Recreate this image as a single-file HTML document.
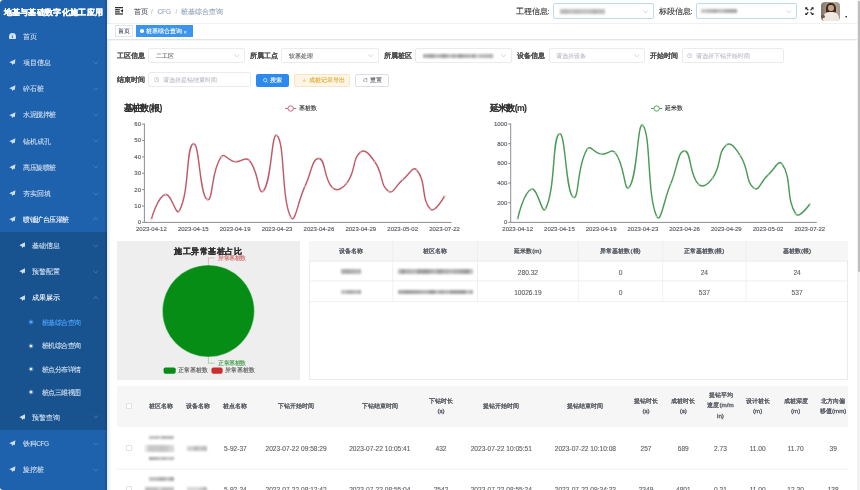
<!DOCTYPE html><html><head><meta charset="utf-8"><style>
*{margin:0;padding:0;box-sizing:border-box}
html,body{width:860px;height:490px;overflow:hidden;background:#fff;font-family:"Liberation Sans", sans-serif;}
#w{position:absolute;left:0;top:0;width:860px;height:490px;will-change:transform}
.a{position:absolute;white-space:nowrap}
.t{position:absolute;white-space:nowrap;line-height:1;transform:translateY(-50%)}
.c{position:absolute;white-space:nowrap;line-height:1;transform:translate(-50%,-50%)}
.r{position:absolute;white-space:nowrap;line-height:1;transform:translate(-100%,-50%)}
.m{position:absolute;white-space:nowrap;transform:translate(-50%,-50%);text-align:center}
.blur{position:absolute;filter:blur(1px)}
</style></head><body><div id="w">

<div class="a" style="left:0;top:0;width:107px;height:490px;background:#1e61ad;border-radius:3.5px 0 0 3px"></div>
<div class="a" style="left:0;top:232.2px;width:107px;height:198.2px;background:#18538f"></div>
<div class="a" style="left:104.6px;top:0;width:2.4px;height:490px;background:rgba(0,20,60,.13)"></div>
<div class="t" style="left:3.50px;top:11.90px;font-size:8.30px;color:#fff;letter-spacing:0.330px;font-weight:bold;-webkit-text-stroke:0.3px #fff;">地基与基础数字化施工应用</div>
<svg class="a" style="left:8.9px;top:32.900000000000006px" width="7" height="6" viewBox="0 0 16 14"><path d="M8 0 A8 8 0 0 1 16 8 L16 12 Q16 14 14 14 L2 14 Q0 14 0 12 L0 8 A8 8 0 0 1 8 0 Z" fill="#d5e6fa"/><path d="M8 10 L7 4.5" stroke="#3a5f8f" stroke-width="1.5"/><circle cx="8" cy="10" r="1.5" fill="#3a5f8f"/></svg>
<div class="t" style="left:23.40px;top:36.70px;font-size:6.50px;color:#d3e0f0;-webkit-text-stroke:0.08px #d3e0f0;">首页</div>
<svg class="a" style="left:9.2px;top:59.199999999999996px" width="6.8" height="6.4" viewBox="0 0 16 15"><path d="M15.2 0.3 L0.6 7.8 L5.6 9.6 L8.6 14.2 L10.2 10.8 L13.2 12.4 Z" fill="#d8e7fa"/><path d="M15 0.6 L5.6 9.6" stroke="rgba(31,90,170,.35)" stroke-width="1"/></svg>
<div class="t" style="left:23.40px;top:62.90px;font-size:6.50px;color:#d3e0f0;-webkit-text-stroke:0.08px #d3e0f0;">项目信息</div>
<svg class="a" style="left:92.7px;top:60.6px;overflow:visible" width="5.6" height="3.6" viewBox="-0.5 -0.5 5.6 3.6"><path d="M0 0 L2.3 2.6 L4.6 0" fill="none" stroke="rgba(255,255,255,.24)" stroke-width="0.8"/></svg>
<svg class="a" style="left:9.2px;top:85.39999999999999px" width="6.8" height="6.4" viewBox="0 0 16 15"><path d="M15.2 0.3 L0.6 7.8 L5.6 9.6 L8.6 14.2 L10.2 10.8 L13.2 12.4 Z" fill="#d8e7fa"/><path d="M15 0.6 L5.6 9.6" stroke="rgba(31,90,170,.35)" stroke-width="1"/></svg>
<div class="t" style="left:23.40px;top:89.10px;font-size:6.50px;color:#d3e0f0;-webkit-text-stroke:0.08px #d3e0f0;">碎石桩</div>
<svg class="a" style="left:92.7px;top:86.8px;overflow:visible" width="5.6" height="3.6" viewBox="-0.5 -0.5 5.6 3.6"><path d="M0 0 L2.3 2.6 L4.6 0" fill="none" stroke="rgba(255,255,255,.24)" stroke-width="0.8"/></svg>
<svg class="a" style="left:9.2px;top:111.6px" width="6.8" height="6.4" viewBox="0 0 16 15"><path d="M15.2 0.3 L0.6 7.8 L5.6 9.6 L8.6 14.2 L10.2 10.8 L13.2 12.4 Z" fill="#d8e7fa"/><path d="M15 0.6 L5.6 9.6" stroke="rgba(31,90,170,.35)" stroke-width="1"/></svg>
<div class="t" style="left:23.40px;top:115.30px;font-size:6.50px;color:#d3e0f0;letter-spacing:-0.520px;-webkit-text-stroke:0.08px #d3e0f0;">水泥搅拌桩</div>
<svg class="a" style="left:92.7px;top:113.0px;overflow:visible" width="5.6" height="3.6" viewBox="-0.5 -0.5 5.6 3.6"><path d="M0 0 L2.3 2.6 L4.6 0" fill="none" stroke="rgba(255,255,255,.24)" stroke-width="0.8"/></svg>
<svg class="a" style="left:9.2px;top:137.8px" width="6.8" height="6.4" viewBox="0 0 16 15"><path d="M15.2 0.3 L0.6 7.8 L5.6 9.6 L8.6 14.2 L10.2 10.8 L13.2 12.4 Z" fill="#d8e7fa"/><path d="M15 0.6 L5.6 9.6" stroke="rgba(31,90,170,.35)" stroke-width="1"/></svg>
<div class="t" style="left:23.40px;top:141.50px;font-size:6.50px;color:#d3e0f0;-webkit-text-stroke:0.08px #d3e0f0;">钻机成孔</div>
<svg class="a" style="left:92.7px;top:139.2px;overflow:visible" width="5.6" height="3.6" viewBox="-0.5 -0.5 5.6 3.6"><path d="M0 0 L2.3 2.6 L4.6 0" fill="none" stroke="rgba(255,255,255,.24)" stroke-width="0.8"/></svg>
<svg class="a" style="left:9.2px;top:164.0px" width="6.8" height="6.4" viewBox="0 0 16 15"><path d="M15.2 0.3 L0.6 7.8 L5.6 9.6 L8.6 14.2 L10.2 10.8 L13.2 12.4 Z" fill="#d8e7fa"/><path d="M15 0.6 L5.6 9.6" stroke="rgba(31,90,170,.35)" stroke-width="1"/></svg>
<div class="t" style="left:23.40px;top:167.70px;font-size:6.50px;color:#d3e0f0;letter-spacing:-0.520px;-webkit-text-stroke:0.08px #d3e0f0;">高压旋喷桩</div>
<svg class="a" style="left:92.7px;top:165.39999999999998px;overflow:visible" width="5.6" height="3.6" viewBox="-0.5 -0.5 5.6 3.6"><path d="M0 0 L2.3 2.6 L4.6 0" fill="none" stroke="rgba(255,255,255,.24)" stroke-width="0.8"/></svg>
<svg class="a" style="left:9.2px;top:190.20000000000002px" width="6.8" height="6.4" viewBox="0 0 16 15"><path d="M15.2 0.3 L0.6 7.8 L5.6 9.6 L8.6 14.2 L10.2 10.8 L13.2 12.4 Z" fill="#d8e7fa"/><path d="M15 0.6 L5.6 9.6" stroke="rgba(31,90,170,.35)" stroke-width="1"/></svg>
<div class="t" style="left:23.40px;top:193.90px;font-size:6.50px;color:#d3e0f0;-webkit-text-stroke:0.08px #d3e0f0;">夯实回填</div>
<svg class="a" style="left:92.7px;top:191.6px;overflow:visible" width="5.6" height="3.6" viewBox="-0.5 -0.5 5.6 3.6"><path d="M0 0 L2.3 2.6 L4.6 0" fill="none" stroke="rgba(255,255,255,.24)" stroke-width="0.8"/></svg>
<svg class="a" style="left:9.2px;top:215.9px" width="6.8" height="6.4" viewBox="0 0 16 15"><path d="M15.2 0.3 L0.6 7.8 L5.6 9.6 L8.6 14.2 L10.2 10.8 L13.2 12.4 Z" fill="#d8e7fa"/><path d="M15 0.6 L5.6 9.6" stroke="rgba(31,90,170,.35)" stroke-width="1"/></svg>
<div class="t" style="left:23.40px;top:219.60px;font-size:6.50px;color:#ffffff;letter-spacing:-0.520px;-webkit-text-stroke:0.08px #ffffff;">喷锤扩台压灌桩</div>
<svg class="a" style="left:92.7px;top:217.29999999999998px;overflow:visible" width="5.6" height="3.6" viewBox="-0.5 -0.5 5.6 3.6"><path d="M0 2.6 L2.3 0 L4.6 2.6" fill="none" stroke="rgba(255,255,255,.24)" stroke-width="0.8"/></svg>
<svg class="a" style="left:18.6px;top:242.10000000000002px" width="6.8" height="6.4" viewBox="0 0 16 15"><path d="M15.2 0.3 L0.6 7.8 L5.6 9.6 L8.6 14.2 L10.2 10.8 L13.2 12.4 Z" fill="#d8e7fa"/><path d="M15 0.6 L5.6 9.6" stroke="rgba(31,90,170,.35)" stroke-width="1"/></svg>
<div class="t" style="left:32.40px;top:245.80px;font-size:6.50px;color:#d3e0f0;-webkit-text-stroke:0.08px #d3e0f0;">基础信息</div>
<svg class="a" style="left:92.7px;top:243.5px;overflow:visible" width="5.6" height="3.6" viewBox="-0.5 -0.5 5.6 3.6"><path d="M0 0 L2.3 2.6 L4.6 0" fill="none" stroke="rgba(255,255,255,.24)" stroke-width="0.8"/></svg>
<svg class="a" style="left:18.6px;top:268.3px" width="6.8" height="6.4" viewBox="0 0 16 15"><path d="M15.2 0.3 L0.6 7.8 L5.6 9.6 L8.6 14.2 L10.2 10.8 L13.2 12.4 Z" fill="#d8e7fa"/><path d="M15 0.6 L5.6 9.6" stroke="rgba(31,90,170,.35)" stroke-width="1"/></svg>
<div class="t" style="left:32.40px;top:272.00px;font-size:6.50px;color:#d3e0f0;-webkit-text-stroke:0.08px #d3e0f0;">预警配置</div>
<svg class="a" style="left:92.7px;top:269.7px;overflow:visible" width="5.6" height="3.6" viewBox="-0.5 -0.5 5.6 3.6"><path d="M0 0 L2.3 2.6 L4.6 0" fill="none" stroke="rgba(255,255,255,.24)" stroke-width="0.8"/></svg>
<svg class="a" style="left:18.6px;top:294.5px" width="6.8" height="6.4" viewBox="0 0 16 15"><path d="M15.2 0.3 L0.6 7.8 L5.6 9.6 L8.6 14.2 L10.2 10.8 L13.2 12.4 Z" fill="#d8e7fa"/><path d="M15 0.6 L5.6 9.6" stroke="rgba(31,90,170,.35)" stroke-width="1"/></svg>
<div class="t" style="left:32.40px;top:298.20px;font-size:6.50px;color:#ffffff;-webkit-text-stroke:0.08px #ffffff;">成果展示</div>
<svg class="a" style="left:92.7px;top:295.9px;overflow:visible" width="5.6" height="3.6" viewBox="-0.5 -0.5 5.6 3.6"><path d="M0 2.6 L2.3 0 L4.6 2.6" fill="none" stroke="rgba(255,255,255,.24)" stroke-width="0.8"/></svg>
<svg class="a" style="left:28.400000000000002px;top:319.4px" width="6" height="6" viewBox="0 0 6 6"><circle cx="3" cy="3" r="2.5" fill="rgba(90,170,255,.35)"/><circle cx="3" cy="3" r="1.35" fill="#4da6ff"/></svg>
<div class="t" style="left:41.80px;top:322.90px;font-size:6.50px;color:#4da6ff;letter-spacing:-0.520px;-webkit-text-stroke:0.08px #4da6ff;">桩基综合查询</div>
<svg class="a" style="left:28.400000000000002px;top:342.7px" width="6" height="6" viewBox="0 0 6 6"><circle cx="3" cy="3" r="2.5" fill="rgba(255,255,255,.22)"/><circle cx="3" cy="3" r="1.35" fill="#e6edf7"/></svg>
<div class="t" style="left:41.80px;top:346.20px;font-size:6.50px;color:#d3e0f0;letter-spacing:-0.520px;-webkit-text-stroke:0.08px #d3e0f0;">桩机综合查询</div>
<svg class="a" style="left:28.400000000000002px;top:366.0px" width="6" height="6" viewBox="0 0 6 6"><circle cx="3" cy="3" r="2.5" fill="rgba(255,255,255,.22)"/><circle cx="3" cy="3" r="1.35" fill="#e6edf7"/></svg>
<div class="t" style="left:41.80px;top:369.50px;font-size:6.50px;color:#d3e0f0;letter-spacing:-0.520px;-webkit-text-stroke:0.08px #d3e0f0;">桩点分布详情</div>
<svg class="a" style="left:28.400000000000002px;top:389.3px" width="6" height="6" viewBox="0 0 6 6"><circle cx="3" cy="3" r="2.5" fill="rgba(255,255,255,.22)"/><circle cx="3" cy="3" r="1.35" fill="#e6edf7"/></svg>
<div class="t" style="left:41.80px;top:392.80px;font-size:6.50px;color:#d3e0f0;letter-spacing:-0.520px;-webkit-text-stroke:0.08px #d3e0f0;">桩点三维视图</div>
<svg class="a" style="left:18.6px;top:414.0px" width="6.8" height="6.4" viewBox="0 0 16 15"><path d="M15.2 0.3 L0.6 7.8 L5.6 9.6 L8.6 14.2 L10.2 10.8 L13.2 12.4 Z" fill="#d8e7fa"/><path d="M15 0.6 L5.6 9.6" stroke="rgba(31,90,170,.35)" stroke-width="1"/></svg>
<div class="t" style="left:32.40px;top:417.70px;font-size:6.50px;color:#d3e0f0;-webkit-text-stroke:0.08px #d3e0f0;">预警查询</div>
<svg class="a" style="left:92.7px;top:415.4px;overflow:visible" width="5.6" height="3.6" viewBox="-0.5 -0.5 5.6 3.6"><path d="M0 0 L2.3 2.6 L4.6 0" fill="none" stroke="rgba(255,255,255,.24)" stroke-width="0.8"/></svg>
<svg class="a" style="left:9.2px;top:440.2px" width="6.8" height="6.4" viewBox="0 0 16 15"><path d="M15.2 0.3 L0.6 7.8 L5.6 9.6 L8.6 14.2 L10.2 10.8 L13.2 12.4 Z" fill="#d8e7fa"/><path d="M15 0.6 L5.6 9.6" stroke="rgba(31,90,170,.35)" stroke-width="1"/></svg>
<div class="t" style="left:23.40px;top:443.90px;font-size:6.50px;color:#d3e0f0;letter-spacing:-0.520px;-webkit-text-stroke:0.08px #d3e0f0;">铁科CFG</div>
<svg class="a" style="left:92.7px;top:441.59999999999997px;overflow:visible" width="5.6" height="3.6" viewBox="-0.5 -0.5 5.6 3.6"><path d="M0 0 L2.3 2.6 L4.6 0" fill="none" stroke="rgba(255,255,255,.24)" stroke-width="0.8"/></svg>
<svg class="a" style="left:9.2px;top:466.40000000000003px" width="6.8" height="6.4" viewBox="0 0 16 15"><path d="M15.2 0.3 L0.6 7.8 L5.6 9.6 L8.6 14.2 L10.2 10.8 L13.2 12.4 Z" fill="#d8e7fa"/><path d="M15 0.6 L5.6 9.6" stroke="rgba(31,90,170,.35)" stroke-width="1"/></svg>
<div class="t" style="left:23.40px;top:470.10px;font-size:6.50px;color:#d3e0f0;-webkit-text-stroke:0.08px #d3e0f0;">旋挖桩</div>
<svg class="a" style="left:92.7px;top:467.8px;overflow:visible" width="5.6" height="3.6" viewBox="-0.5 -0.5 5.6 3.6"><path d="M0 0 L2.3 2.6 L4.6 0" fill="none" stroke="rgba(255,255,255,.24)" stroke-width="0.8"/></svg>
<div class="a" style="left:107px;top:0;width:750px;height:24.2px;background:#fff;border-bottom:1px solid #f0f0f0"></div>
<div class="a" style="left:107px;top:0;width:4px;height:490px;background:linear-gradient(90deg,rgba(0,21,41,.10),rgba(0,21,41,0))"></div>
<svg class="a" style="left:115.1px;top:7.2px" width="8" height="7.6" viewBox="0 0 16 15.2"><rect x="0" y="0" width="16" height="2.5" fill="#2d2d2d"/><rect x="0" y="4.2" width="9.6" height="2.5" fill="#2d2d2d"/><rect x="0" y="8.5" width="9.6" height="2.5" fill="#2d2d2d"/><rect x="0" y="12.7" width="16" height="2.5" fill="#2d2d2d"/><path d="M16 3.8 L11 7.6 L16 11.4 Z" fill="#2d2d2d"/></svg>
<div class="t" style="left:134.30px;top:11.90px;font-size:6.60px;color:#50535a;-webkit-text-stroke:0.1px #50535a;">首页</div>
<div class="t" style="left:151.00px;top:12.40px;font-size:6.50px;color:#c0c4cc;-webkit-text-stroke:0.12px #c0c4cc;">/</div>
<div class="t" style="left:157.40px;top:12.40px;font-size:6.50px;color:#97a8be;-webkit-text-stroke:0.12px #97a8be;">CFG</div>
<div class="t" style="left:175.60px;top:12.40px;font-size:6.50px;color:#c0c4cc;-webkit-text-stroke:0.12px #c0c4cc;">/</div>
<div class="t" style="left:181.30px;top:11.90px;font-size:6.60px;color:#97a8be;-webkit-text-stroke:0.12px #97a8be;">桩基综合查询</div>
<div class="t" style="left:515.60px;top:12.10px;font-size:7.50px;color:#303133;-webkit-text-stroke:0.1px #303133;">工程信息:</div>
<div class="a" style="left:552.7px;top:3.1px;width:101.1px;height:16.4px;border:0.7px solid #bcdce8;border-radius:2px;background:#fff"></div><div class="a" style="left:560.20px;top:9.00px;width:45.00px;height:4.60px;filter:blur(1.0px);display:flex"><div style="width:3.47px;height:100%;background:rgb(189,189,189)"></div><div style="width:4.74px;height:100%;background:rgb(184,184,184)"></div><div style="width:6.75px;height:100%;background:rgb(195,195,195)"></div><div style="width:3.68px;height:100%;background:rgb(187,187,187)"></div><div style="width:5.09px;height:100%;background:rgb(194,194,194)"></div><div style="width:5.68px;height:100%;background:rgb(197,197,197)"></div><div style="width:3.61px;height:100%;background:rgb(191,191,191)"></div><div style="width:3.93px;height:100%;background:rgb(181,181,181)"></div><div style="width:6.51px;height:100%;background:rgb(190,190,190)"></div><div style="width:1.56px;height:100%;background:rgb(195,195,195)"></div></div><svg class="a" style="left:642.8000000000001px;top:9.6px;overflow:visible" width="5.4" height="3.4" viewBox="-0.5 -0.5 5.4 3.4"><path d="M0 0 L2.2 2.4 L4.4 0" fill="none" stroke="#c0c4cc" stroke-width="0.7"/></svg>
<div class="t" style="left:658.50px;top:12.10px;font-size:7.50px;color:#303133;-webkit-text-stroke:0.1px #303133;">标段信息:</div>
<div class="a" style="left:695.9px;top:2.9px;width:101.4px;height:16.6px;border:0.7px solid #bcdce8;border-radius:2px;background:#fff"></div><div class="a" style="left:701.10px;top:8.90px;width:36.00px;height:4.60px;filter:blur(1.0px);display:flex"><div style="width:6.10px;height:100%;background:rgb(199,199,199)"></div><div style="width:5.87px;height:100%;background:rgb(184,184,184)"></div><div style="width:2.69px;height:100%;background:rgb(170,170,170)"></div><div style="width:5.41px;height:100%;background:rgb(188,188,188)"></div><div style="width:2.85px;height:100%;background:rgb(195,195,195)"></div><div style="width:4.58px;height:100%;background:rgb(174,174,174)"></div><div style="width:2.61px;height:100%;background:rgb(167,167,167)"></div><div style="width:3.94px;height:100%;background:rgb(169,169,169)"></div><div style="width:1.96px;height:100%;background:rgb(164,164,164)"></div></div><svg class="a" style="left:786.3px;top:9.500000000000002px;overflow:visible" width="5.4" height="3.4" viewBox="-0.5 -0.5 5.4 3.4"><path d="M0 0 L2.2 2.4 L4.4 0" fill="none" stroke="#c0c4cc" stroke-width="0.7"/></svg>
<svg class="a" style="left:805.0px;top:7.0px" width="8.8" height="8.4" viewBox="0 0 18 17"><g stroke="#2b2b2b" stroke-width="2.6" stroke-linecap="round" fill="none"><path d="M2.4 2.4 L5.9 5.6"/><path d="M15.6 2.4 L12.1 5.6"/><path d="M2.4 14.6 L5.9 11.4"/><path d="M15.6 14.6 L12.1 11.4"/></g><g fill="#2b2b2b"><path d="M0.5 0.5 H5.5 L0.5 5.5 Z"/><path d="M17.5 0.5 H12.5 L17.5 5.5 Z"/><path d="M0.5 16.5 H5.5 L0.5 11.5 Z"/><path d="M17.5 16.5 H12.5 L17.5 11.5 Z"/></g></svg>
<div class="a" style="left:821.3px;top:2.1px;width:18.8px;height:18.8px;border-radius:4px;overflow:hidden;background:linear-gradient(90deg,#86766a 0%,#9c8e80 30%,#b4aa9c 65%,#a49888 100%)"><div class="a" style="left:5.2px;top:1.2px;width:9.6px;height:10.5px;border-radius:48% 48% 30% 30%;background:#3b2a20"></div><div class="a" style="left:7.2px;top:2.8px;width:5.4px;height:6.6px;border-radius:45%;background:#c9a183"></div><div class="a" style="left:1.5px;top:10.2px;width:16px;height:10px;border-radius:6px 6px 0 0;background:#eee8e0"></div><div class="a" style="left:0px;top:12.5px;width:4px;height:3px;border-radius:2px;background:#6e5848;filter:blur(.6px)"></div></div>
<svg class="a" style="left:844.9px;top:15.7px" width="2.6" height="1.9" viewBox="0 0 4 3"><path d="M0 0 H4 L2 3 Z" fill="#333"/></svg>
<div class="a" style="left:107px;top:24.2px;width:750px;height:16px;background:#fff;border-bottom:0.9px solid #e4e4e4;box-shadow:0 0.6px 1.6px rgba(0,0,0,.08)"></div>
<div class="a" style="left:114.9px;top:25.2px;width:18.6px;height:12px;border:0.6px solid #e2e5ea;background:#fff"></div>
<div class="c" style="left:124.20px;top:31.80px;font-size:5.80px;color:#495060;-webkit-text-stroke:0.12px #495060;">首页</div>
<div class="a" style="left:135.8px;top:25.2px;width:57px;height:11.7px;background:#3b94ee;"></div>
<div class="a" style="left:140.3px;top:29.3px;width:3.5px;height:3.5px;border-radius:50%;background:#fff"></div>
<div class="t" style="left:145.70px;top:31.70px;font-size:5.80px;color:#fff;-webkit-text-stroke:0.12px #fff;">桩基综合查询</div>
<div class="c" style="left:185.30px;top:32.30px;font-size:5.00px;color:#d6e6f8;-webkit-text-stroke:0.12px #d6e6f8;">×</div>
<div class="t" style="left:116.80px;top:55.80px;font-size:6.50px;color:#505050;font-weight:bold;-webkit-text-stroke:0.1px #505050;">工区信息</div>
<div class="a" style="left:148.4px;top:48.3px;width:96.6px;height:15.2px;border:0.7px solid #ebebeb;border-radius:2px;background:#fff"></div><div class="t" style="left:155.70px;top:56.40px;font-size:6.20px;color:#606266;-webkit-text-stroke:0.12px #606266;">二工区</div><svg class="a" style="left:234.0px;top:54.199999999999996px;overflow:visible" width="5.4" height="3.4" viewBox="-0.5 -0.5 5.4 3.4"><path d="M0 0 L2.2 2.4 L4.4 0" fill="none" stroke="#c0c4cc" stroke-width="0.7"/></svg>
<div class="t" style="left:249.80px;top:55.80px;font-size:6.50px;color:#505050;font-weight:bold;-webkit-text-stroke:0.1px #505050;">所属工点</div>
<div class="a" style="left:281.3px;top:48.3px;width:97.4px;height:15.2px;border:0.7px solid #ebebeb;border-radius:2px;background:#fff"></div><div class="t" style="left:288.60px;top:56.40px;font-size:6.20px;color:#606266;-webkit-text-stroke:0.12px #606266;">软基处理</div><svg class="a" style="left:367.70000000000005px;top:54.199999999999996px;overflow:visible" width="5.4" height="3.4" viewBox="-0.5 -0.5 5.4 3.4"><path d="M0 0 L2.2 2.4 L4.4 0" fill="none" stroke="#c0c4cc" stroke-width="0.7"/></svg>
<div class="t" style="left:383.70px;top:55.80px;font-size:6.50px;color:#505050;font-weight:bold;-webkit-text-stroke:0.1px #505050;">所属桩区</div>
<div class="a" style="left:415.3px;top:48.3px;width:96.9px;height:15.2px;border:0.7px solid #ebebeb;border-radius:2px;background:#fff"></div><div class="a" style="left:423.20px;top:54.00px;width:70.00px;height:3.80px;filter:blur(1.0px);display:flex"><div style="width:4.77px;height:100%;background:rgb(176,176,176)"></div><div style="width:6.35px;height:100%;background:rgb(162,162,162)"></div><div style="width:6.97px;height:100%;background:rgb(185,185,185)"></div><div style="width:6.11px;height:100%;background:rgb(160,160,160)"></div><div style="width:5.34px;height:100%;background:rgb(191,191,191)"></div><div style="width:2.67px;height:100%;background:rgb(166,166,166)"></div><div style="width:2.99px;height:100%;background:rgb(188,188,188)"></div><div style="width:4.73px;height:100%;background:rgb(160,160,160)"></div><div style="width:6.25px;height:100%;background:rgb(178,178,178)"></div><div style="width:2.78px;height:100%;background:rgb(190,190,190)"></div><div style="width:3.31px;height:100%;background:rgb(161,161,161)"></div><div style="width:4.86px;height:100%;background:rgb(200,200,200)"></div><div style="width:6.96px;height:100%;background:rgb(186,186,186)"></div><div style="width:3.89px;height:100%;background:rgb(180,180,180)"></div><div style="width:2.03px;height:100%;background:rgb(174,174,174)"></div></div><svg class="a" style="left:501.20000000000005px;top:54.199999999999996px;overflow:visible" width="5.4" height="3.4" viewBox="-0.5 -0.5 5.4 3.4"><path d="M0 0 L2.2 2.4 L4.4 0" fill="none" stroke="#c0c4cc" stroke-width="0.7"/></svg>
<div class="t" style="left:516.70px;top:55.80px;font-size:6.50px;color:#505050;font-weight:bold;-webkit-text-stroke:0.1px #505050;">设备信息</div>
<div class="a" style="left:548.8px;top:48.3px;width:96.5px;height:15.2px;border:0.7px solid #ebebeb;border-radius:2px;background:#fff"></div><div class="t" style="left:556.10px;top:56.40px;font-size:6.20px;color:#c0c4cc;-webkit-text-stroke:0.12px #c0c4cc;">请选择设备</div><svg class="a" style="left:634.3px;top:54.199999999999996px;overflow:visible" width="5.4" height="3.4" viewBox="-0.5 -0.5 5.4 3.4"><path d="M0 0 L2.2 2.4 L4.4 0" fill="none" stroke="#c0c4cc" stroke-width="0.7"/></svg>
<div class="t" style="left:649.90px;top:55.80px;font-size:6.50px;color:#505050;font-weight:bold;-webkit-text-stroke:0.1px #505050;">开始时间</div>
<div class="a" style="left:681.6px;top:48.3px;width:102.8px;height:15.2px;border:0.7px solid #ebebeb;border-radius:2px;background:#fff"></div><svg class="a" style="left:687.1px;top:53.199999999999996px" width="5.4" height="5.4" viewBox="0 0 10 10"><circle cx="5" cy="5" r="4.1" fill="none" stroke="#b4b8bf" stroke-width="1.1"/><path d="M5 2.5 V5.2 H7.2" fill="none" stroke="#b4b8bf" stroke-width="1.1"/></svg><div class="t" style="left:696.00px;top:56.40px;font-size:6.20px;color:#c0c4cc;-webkit-text-stroke:0.12px #c0c4cc;">请选择下钻开始时间</div>
<div class="t" style="left:116.80px;top:80.00px;font-size:6.50px;color:#505050;font-weight:bold;-webkit-text-stroke:0.1px #505050;">结束时间</div>
<div class="a" style="left:148.4px;top:72.4px;width:102.5px;height:15.1px;border:0.7px solid #ebebeb;border-radius:2px;background:#fff"></div><svg class="a" style="left:153.9px;top:77.25px" width="5.4" height="5.4" viewBox="0 0 10 10"><circle cx="5" cy="5" r="4.1" fill="none" stroke="#b4b8bf" stroke-width="1.1"/><path d="M5 2.5 V5.2 H7.2" fill="none" stroke="#b4b8bf" stroke-width="1.1"/></svg><div class="t" style="left:162.80px;top:80.45px;font-size:6.20px;color:#c0c4cc;-webkit-text-stroke:0.12px #c0c4cc;">请选择提钻结束时间</div>
<div class="a" style="left:255.9px;top:73.5px;width:33.6px;height:13px;border-radius:2px;background:#2a8af0"></div>
<svg class="a" style="left:262.6px;top:77.5px" width="5" height="5" viewBox="0 0 10 10"><circle cx="4.3" cy="4.3" r="3.4" fill="none" stroke="#fff" stroke-width="1.3"/><path d="M6.8 6.8 L9.3 9.3" stroke="#fff" stroke-width="1.3"/></svg>
<div class="t" style="left:269.50px;top:80.60px;font-size:5.80px;color:#fff;-webkit-text-stroke:0.12px #fff;">搜索</div>
<div class="a" style="left:294.4px;top:73.5px;width:55.8px;height:13px;border-radius:2px;background:#fdf6e6;border:0.6px solid #f7e5c3"></div>
<svg class="a" style="left:301.6px;top:77.6px" width="4.6" height="4.8" viewBox="0 0 10 10"><path d="M5 0.5 V7 M2 4.3 L5 7.3 L8 4.3 M1 9.3 H9" fill="none" stroke="#e3ad3a" stroke-width="1.1"/></svg>
<div class="t" style="left:309.20px;top:80.60px;font-size:5.80px;color:#e3ad3a;-webkit-text-stroke:0.12px #e3ad3a;">成桩记录导出</div>
<div class="a" style="left:355px;top:73.5px;width:33.8px;height:13px;border-radius:2px;background:#fff;border:0.6px solid #dcdfe6"></div>
<svg class="a" style="left:362.9px;top:77.6px" width="4.8" height="4.8" viewBox="0 0 10 10"><path d="M8.6 5.2 A3.7 3.7 0 1 1 7.2 2.0" fill="none" stroke="#606266" stroke-width="1.1"/><path d="M5.8 0.6 L8.6 1.6 L7.6 4.4" fill="none" stroke="#606266" stroke-width="1"/></svg>
<div class="t" style="left:369.80px;top:80.60px;font-size:5.80px;color:#606266;-webkit-text-stroke:0.12px #606266;">重置</div>
<div class="t" style="left:123.60px;top:107.70px;font-size:8.60px;color:#333;letter-spacing:-0.600px;font-weight:bold;-webkit-text-stroke:0.12px #333;">基桩数(根)</div><svg class="a" style="left:285.1px;top:104.7px" width="12" height="7" viewBox="0 0 12 7"><path d="M0 3.5 H11.3" stroke="#c05c68" stroke-width="0.9"/><circle cx="5.65" cy="3.5" r="2.7" fill="#fff" stroke="#c05c68" stroke-width="0.9"/></svg><div class="t" style="left:298.90px;top:108.70px;font-size:5.70px;color:#333;-webkit-text-stroke:0.12px #333;">基桩数</div><svg class="a" style="left:0;top:0" width="860" height="490" viewBox="0 0 860 490"><path d="M144.4 123.6 V222.4 H451.52" fill="none" stroke="#6e7079" stroke-width="0.8"/><path d="M142.0 222.40 H144.4" stroke="#6e7079" stroke-width="0.8"/><path d="M142.0 206.02 H144.4" stroke="#6e7079" stroke-width="0.8"/><path d="M142.0 189.63 H144.4" stroke="#6e7079" stroke-width="0.8"/><path d="M142.0 173.25 H144.4" stroke="#6e7079" stroke-width="0.8"/><path d="M142.0 156.87 H144.4" stroke="#6e7079" stroke-width="0.8"/><path d="M142.0 140.48 H144.4" stroke="#6e7079" stroke-width="0.8"/><path d="M142.0 124.10 H144.4" stroke="#6e7079" stroke-width="0.8"/><path d="M151.38 219.12 C151.38 219.12 157.42 196.87 165.34 194.55 C171.38 192.78 175.97 217.00 179.30 210.93 C189.93 191.60 185.66 146.88 193.26 143.76 C199.62 141.15 199.38 195.78 207.22 199.46 C213.34 202.34 210.69 171.03 221.18 156.87 C224.65 152.19 227.98 160.94 235.14 161.78 C241.94 162.58 245.03 155.84 249.10 160.14 C258.99 170.59 257.86 195.85 263.06 191.27 C271.82 183.56 271.32 130.21 277.02 135.57 C285.28 143.32 281.08 199.48 290.98 217.49 C295.04 224.88 297.64 201.77 304.94 186.36 C311.60 172.28 312.08 158.10 318.90 158.50 C326.04 158.92 323.26 179.54 332.86 188.00 C337.22 191.83 342.60 188.53 346.82 183.08 C356.56 170.51 351.48 159.05 360.78 151.95 C365.44 148.40 369.94 155.03 374.74 161.78 C383.90 174.69 379.72 185.47 388.70 191.27 C393.68 194.48 395.48 185.28 402.66 179.80 C409.44 174.63 412.57 165.69 416.62 169.97 C426.53 180.44 421.01 200.31 430.58 209.29 C434.97 213.42 444.54 196.19 444.54 196.19" fill="none" stroke="#c05c68" stroke-width="1.45" stroke-linejoin="round"/><circle cx="151.38" cy="219.12" r="1.0" fill="#fff" stroke="#c05c68" stroke-width="0.4" opacity="0.6"/><circle cx="165.34" cy="194.55" r="1.0" fill="#fff" stroke="#c05c68" stroke-width="0.4" opacity="0.6"/><circle cx="179.30" cy="210.93" r="1.0" fill="#fff" stroke="#c05c68" stroke-width="0.4" opacity="0.6"/><circle cx="193.26" cy="143.76" r="1.0" fill="#fff" stroke="#c05c68" stroke-width="0.4" opacity="0.6"/><circle cx="207.22" cy="199.46" r="1.0" fill="#fff" stroke="#c05c68" stroke-width="0.4" opacity="0.6"/><circle cx="221.18" cy="156.87" r="1.0" fill="#fff" stroke="#c05c68" stroke-width="0.4" opacity="0.6"/><circle cx="235.14" cy="161.78" r="1.0" fill="#fff" stroke="#c05c68" stroke-width="0.4" opacity="0.6"/><circle cx="249.10" cy="160.14" r="1.0" fill="#fff" stroke="#c05c68" stroke-width="0.4" opacity="0.6"/><circle cx="263.06" cy="191.27" r="1.0" fill="#fff" stroke="#c05c68" stroke-width="0.4" opacity="0.6"/><circle cx="277.02" cy="135.57" r="1.0" fill="#fff" stroke="#c05c68" stroke-width="0.4" opacity="0.6"/><circle cx="290.98" cy="217.49" r="1.0" fill="#fff" stroke="#c05c68" stroke-width="0.4" opacity="0.6"/><circle cx="304.94" cy="186.36" r="1.0" fill="#fff" stroke="#c05c68" stroke-width="0.4" opacity="0.6"/><circle cx="318.90" cy="158.50" r="1.0" fill="#fff" stroke="#c05c68" stroke-width="0.4" opacity="0.6"/><circle cx="332.86" cy="188.00" r="1.0" fill="#fff" stroke="#c05c68" stroke-width="0.4" opacity="0.6"/><circle cx="346.82" cy="183.08" r="1.0" fill="#fff" stroke="#c05c68" stroke-width="0.4" opacity="0.6"/><circle cx="360.78" cy="151.95" r="1.0" fill="#fff" stroke="#c05c68" stroke-width="0.4" opacity="0.6"/><circle cx="374.74" cy="161.78" r="1.0" fill="#fff" stroke="#c05c68" stroke-width="0.4" opacity="0.6"/><circle cx="388.70" cy="191.27" r="1.0" fill="#fff" stroke="#c05c68" stroke-width="0.4" opacity="0.6"/><circle cx="402.66" cy="179.80" r="1.0" fill="#fff" stroke="#c05c68" stroke-width="0.4" opacity="0.6"/><circle cx="416.62" cy="169.97" r="1.0" fill="#fff" stroke="#c05c68" stroke-width="0.4" opacity="0.6"/><circle cx="430.58" cy="209.29" r="1.0" fill="#fff" stroke="#c05c68" stroke-width="0.4" opacity="0.6"/><circle cx="444.54" cy="196.19" r="1.0" fill="#fff" stroke="#c05c68" stroke-width="0.4" opacity="0.6"/></svg><div class="r" style="left:141.00px;top:222.40px;font-size:6.00px;color:#5a5c63;-webkit-text-stroke:0.15px #5a5c63;">0</div><div class="r" style="left:141.00px;top:206.02px;font-size:6.00px;color:#5a5c63;-webkit-text-stroke:0.15px #5a5c63;">10</div><div class="r" style="left:141.00px;top:189.63px;font-size:6.00px;color:#5a5c63;-webkit-text-stroke:0.15px #5a5c63;">20</div><div class="r" style="left:141.00px;top:173.25px;font-size:6.00px;color:#5a5c63;-webkit-text-stroke:0.15px #5a5c63;">30</div><div class="r" style="left:141.00px;top:156.87px;font-size:6.00px;color:#5a5c63;-webkit-text-stroke:0.15px #5a5c63;">40</div><div class="r" style="left:141.00px;top:140.48px;font-size:6.00px;color:#5a5c63;-webkit-text-stroke:0.15px #5a5c63;">50</div><div class="r" style="left:141.00px;top:124.10px;font-size:6.00px;color:#5a5c63;-webkit-text-stroke:0.15px #5a5c63;">60</div><div class="c" style="left:151.38px;top:229.40px;font-size:6.00px;color:#5a5c63;-webkit-text-stroke:0.15px #5a5c63;">2023-04-12</div><div class="c" style="left:193.26px;top:229.40px;font-size:6.00px;color:#5a5c63;-webkit-text-stroke:0.15px #5a5c63;">2023-04-15</div><div class="c" style="left:235.14px;top:229.40px;font-size:6.00px;color:#5a5c63;-webkit-text-stroke:0.15px #5a5c63;">2023-04-19</div><div class="c" style="left:277.02px;top:229.40px;font-size:6.00px;color:#5a5c63;-webkit-text-stroke:0.15px #5a5c63;">2023-04-23</div><div class="c" style="left:318.90px;top:229.40px;font-size:6.00px;color:#5a5c63;-webkit-text-stroke:0.15px #5a5c63;">2023-04-26</div><div class="c" style="left:360.78px;top:229.40px;font-size:6.00px;color:#5a5c63;-webkit-text-stroke:0.15px #5a5c63;">2023-04-29</div><div class="c" style="left:402.66px;top:229.40px;font-size:6.00px;color:#5a5c63;-webkit-text-stroke:0.15px #5a5c63;">2023-05-02</div><div class="c" style="left:444.54px;top:229.40px;font-size:6.00px;color:#5a5c63;-webkit-text-stroke:0.15px #5a5c63;">2023-07-22</div>
<div class="t" style="left:489.50px;top:107.70px;font-size:8.60px;color:#333;letter-spacing:-0.600px;font-weight:bold;-webkit-text-stroke:0.12px #333;">延米数(m)</div><svg class="a" style="left:651.2px;top:104.7px" width="12" height="7" viewBox="0 0 12 7"><path d="M0 3.5 H11.3" stroke="#4b9a56" stroke-width="0.9"/><circle cx="5.65" cy="3.5" r="2.7" fill="#fff" stroke="#4b9a56" stroke-width="0.9"/></svg><div class="t" style="left:665.00px;top:108.70px;font-size:5.70px;color:#333;-webkit-text-stroke:0.12px #333;">延米数</div><svg class="a" style="left:0;top:0" width="860" height="490" viewBox="0 0 860 490"><path d="M510.7 123.5 V222.4 H816.81" fill="none" stroke="#6e7079" stroke-width="0.8"/><path d="M508.3 222.40 H510.7" stroke="#6e7079" stroke-width="0.8"/><path d="M508.3 202.72 H510.7" stroke="#6e7079" stroke-width="0.8"/><path d="M508.3 183.04 H510.7" stroke="#6e7079" stroke-width="0.8"/><path d="M508.3 163.36 H510.7" stroke="#6e7079" stroke-width="0.8"/><path d="M508.3 143.68 H510.7" stroke="#6e7079" stroke-width="0.8"/><path d="M508.3 124.00 H510.7" stroke="#6e7079" stroke-width="0.8"/><path d="M517.66 218.86 C517.66 218.86 523.57 191.97 531.57 189.14 C537.49 187.05 542.13 215.68 545.49 209.02 C556.05 188.03 551.87 137.03 559.40 133.84 C565.79 131.13 565.46 192.91 573.31 197.21 C579.38 200.53 576.49 165.73 587.23 149.09 C590.40 144.18 593.99 153.20 601.14 154.11 C607.90 154.97 611.27 148.11 615.05 152.63 C625.18 164.74 623.81 192.42 628.97 187.37 C637.73 178.79 637.21 119.44 642.88 125.38 C651.12 134.00 646.75 195.40 656.80 216.50 C660.67 224.62 663.77 200.17 670.71 183.83 C677.69 167.40 677.71 150.84 684.62 150.96 C691.63 151.09 688.73 174.64 698.54 184.32 C702.64 188.37 708.35 184.20 712.45 178.42 C722.26 164.57 716.98 152.76 726.37 145.06 C730.90 141.34 735.70 148.47 740.28 155.59 C749.61 170.07 745.18 182.01 754.19 188.26 C759.10 191.65 760.85 181.21 768.11 174.87 C774.76 169.06 778.49 158.98 782.02 163.95 C792.40 178.56 785.48 198.98 795.94 214.04 C799.39 219.00 809.85 204.00 809.85 204.00" fill="none" stroke="#4b9a56" stroke-width="1.45" stroke-linejoin="round"/><circle cx="517.66" cy="218.86" r="1.0" fill="#fff" stroke="#4b9a56" stroke-width="0.4" opacity="0.6"/><circle cx="531.57" cy="189.14" r="1.0" fill="#fff" stroke="#4b9a56" stroke-width="0.4" opacity="0.6"/><circle cx="545.49" cy="209.02" r="1.0" fill="#fff" stroke="#4b9a56" stroke-width="0.4" opacity="0.6"/><circle cx="559.40" cy="133.84" r="1.0" fill="#fff" stroke="#4b9a56" stroke-width="0.4" opacity="0.6"/><circle cx="573.31" cy="197.21" r="1.0" fill="#fff" stroke="#4b9a56" stroke-width="0.4" opacity="0.6"/><circle cx="587.23" cy="149.09" r="1.0" fill="#fff" stroke="#4b9a56" stroke-width="0.4" opacity="0.6"/><circle cx="601.14" cy="154.11" r="1.0" fill="#fff" stroke="#4b9a56" stroke-width="0.4" opacity="0.6"/><circle cx="615.05" cy="152.63" r="1.0" fill="#fff" stroke="#4b9a56" stroke-width="0.4" opacity="0.6"/><circle cx="628.97" cy="187.37" r="1.0" fill="#fff" stroke="#4b9a56" stroke-width="0.4" opacity="0.6"/><circle cx="642.88" cy="125.38" r="1.0" fill="#fff" stroke="#4b9a56" stroke-width="0.4" opacity="0.6"/><circle cx="656.80" cy="216.50" r="1.0" fill="#fff" stroke="#4b9a56" stroke-width="0.4" opacity="0.6"/><circle cx="670.71" cy="183.83" r="1.0" fill="#fff" stroke="#4b9a56" stroke-width="0.4" opacity="0.6"/><circle cx="684.62" cy="150.96" r="1.0" fill="#fff" stroke="#4b9a56" stroke-width="0.4" opacity="0.6"/><circle cx="698.54" cy="184.32" r="1.0" fill="#fff" stroke="#4b9a56" stroke-width="0.4" opacity="0.6"/><circle cx="712.45" cy="178.42" r="1.0" fill="#fff" stroke="#4b9a56" stroke-width="0.4" opacity="0.6"/><circle cx="726.37" cy="145.06" r="1.0" fill="#fff" stroke="#4b9a56" stroke-width="0.4" opacity="0.6"/><circle cx="740.28" cy="155.59" r="1.0" fill="#fff" stroke="#4b9a56" stroke-width="0.4" opacity="0.6"/><circle cx="754.19" cy="188.26" r="1.0" fill="#fff" stroke="#4b9a56" stroke-width="0.4" opacity="0.6"/><circle cx="768.11" cy="174.87" r="1.0" fill="#fff" stroke="#4b9a56" stroke-width="0.4" opacity="0.6"/><circle cx="782.02" cy="163.95" r="1.0" fill="#fff" stroke="#4b9a56" stroke-width="0.4" opacity="0.6"/><circle cx="795.94" cy="214.04" r="1.0" fill="#fff" stroke="#4b9a56" stroke-width="0.4" opacity="0.6"/><circle cx="809.85" cy="204.00" r="1.0" fill="#fff" stroke="#4b9a56" stroke-width="0.4" opacity="0.6"/></svg><div class="r" style="left:507.30px;top:222.40px;font-size:6.00px;color:#5a5c63;-webkit-text-stroke:0.15px #5a5c63;">0</div><div class="r" style="left:507.30px;top:202.72px;font-size:6.00px;color:#5a5c63;-webkit-text-stroke:0.15px #5a5c63;">200</div><div class="r" style="left:507.30px;top:183.04px;font-size:6.00px;color:#5a5c63;-webkit-text-stroke:0.15px #5a5c63;">400</div><div class="r" style="left:507.30px;top:163.36px;font-size:6.00px;color:#5a5c63;-webkit-text-stroke:0.15px #5a5c63;">600</div><div class="r" style="left:507.30px;top:143.68px;font-size:6.00px;color:#5a5c63;-webkit-text-stroke:0.15px #5a5c63;">800</div><div class="r" style="left:507.30px;top:124.00px;font-size:6.00px;color:#5a5c63;-webkit-text-stroke:0.15px #5a5c63;">1000</div><div class="c" style="left:517.66px;top:229.40px;font-size:6.00px;color:#5a5c63;-webkit-text-stroke:0.15px #5a5c63;">2023-04-12</div><div class="c" style="left:559.40px;top:229.40px;font-size:6.00px;color:#5a5c63;-webkit-text-stroke:0.15px #5a5c63;">2023-04-15</div><div class="c" style="left:601.14px;top:229.40px;font-size:6.00px;color:#5a5c63;-webkit-text-stroke:0.15px #5a5c63;">2023-04-19</div><div class="c" style="left:642.88px;top:229.40px;font-size:6.00px;color:#5a5c63;-webkit-text-stroke:0.15px #5a5c63;">2023-04-23</div><div class="c" style="left:684.62px;top:229.40px;font-size:6.00px;color:#5a5c63;-webkit-text-stroke:0.15px #5a5c63;">2023-04-26</div><div class="c" style="left:726.37px;top:229.40px;font-size:6.00px;color:#5a5c63;-webkit-text-stroke:0.15px #5a5c63;">2023-04-29</div><div class="c" style="left:768.11px;top:229.40px;font-size:6.00px;color:#5a5c63;-webkit-text-stroke:0.15px #5a5c63;">2023-05-02</div><div class="c" style="left:809.85px;top:229.40px;font-size:6.00px;color:#5a5c63;-webkit-text-stroke:0.15px #5a5c63;">2023-07-22</div>
<div class="a" style="left:116.7px;top:240.6px;width:183px;height:139.3px;background:#eeeeee"></div>
<div class="c" style="left:208.30px;top:251.10px;font-size:8.40px;color:#333;letter-spacing:0.450px;font-weight:bold;-webkit-text-stroke:0.2px #333;">施工异常基桩占比</div>
<svg class="a" style="left:0;top:0" width="860" height="490" viewBox="0 0 860 490"><circle cx="208.4" cy="311" r="46" fill="#058d15" stroke="#fff" stroke-width="0.4"/><path d="M208.4 265 V257.9 H214.5" fill="none" stroke="#d9a0a0" stroke-width="0.6"/><path d="M208.4 357 V363.2 H214.5" fill="none" stroke="#6cbf6c" stroke-width="0.6"/><rect x="163.6" y="367.4" width="12.1" height="6.3" rx="1.8" fill="#058d15"/><rect x="211.5" y="367.4" width="11.1" height="6.3" rx="1.8" fill="#c9302c"/></svg>
<div class="t" style="left:218.20px;top:259.10px;font-size:5.50px;color:#d26a6a;letter-spacing:-0.500px;-webkit-text-stroke:0.12px #d26a6a;">异常基桩数</div>
<div class="t" style="left:218.20px;top:363.50px;font-size:5.50px;color:#3c9e48;letter-spacing:-0.500px;-webkit-text-stroke:0.12px #3c9e48;">正常基桩数</div>
<div class="t" style="left:177.80px;top:371.10px;font-size:5.60px;color:#555;-webkit-text-stroke:0.12px #555;">正常基桩数</div>
<div class="t" style="left:224.50px;top:371.10px;font-size:5.60px;color:#555;-webkit-text-stroke:0.12px #555;">异常基桩数</div>
<div class="a" style="left:308.6px;top:240.8px;width:539.6px;height:139.6px;border:0.7px solid #ebebeb;background:#fff"></div>
<div class="a" style="left:309.1px;top:241.3px;width:538.6px;height:20.0px;background:#f6f6f6"></div>
<svg class="a" style="left:0;top:0" width="860" height="490" viewBox="0 0 860 490"><path d="M392.8 241 V301.8" stroke="#ebebeb" stroke-width="0.7"/><path d="M477.5 241 V301.8" stroke="#ebebeb" stroke-width="0.7"/><path d="M578.4 241 V301.8" stroke="#ebebeb" stroke-width="0.7"/><path d="M662.7 241 V301.8" stroke="#ebebeb" stroke-width="0.7"/><path d="M746.0 241 V301.8" stroke="#ebebeb" stroke-width="0.7"/><path d="M308.6 261.3 H848.2" stroke="#ebebeb" stroke-width="0.8"/><path d="M308.6 280.9 H848.2" stroke="#ebebeb" stroke-width="0.8"/><path d="M308.6 301.6 H848.2" stroke="#ebebeb" stroke-width="0.8"/></svg>
<div class="c" style="left:350.70px;top:251.40px;font-size:6.20px;color:#50545c;-webkit-text-stroke:0.3px #50545c;">设备名称</div>
<div class="c" style="left:435.15px;top:251.40px;font-size:6.20px;color:#50545c;-webkit-text-stroke:0.3px #50545c;">桩区名称</div>
<div class="c" style="left:527.95px;top:251.40px;font-size:6.20px;color:#50545c;-webkit-text-stroke:0.3px #50545c;">延米数(m)</div>
<div class="c" style="left:620.55px;top:251.40px;font-size:6.20px;color:#50545c;-webkit-text-stroke:0.3px #50545c;">异常基桩数(根)</div>
<div class="c" style="left:704.35px;top:251.40px;font-size:6.20px;color:#50545c;-webkit-text-stroke:0.3px #50545c;">正常基桩数(根)</div>
<div class="c" style="left:797.10px;top:251.40px;font-size:6.20px;color:#50545c;-webkit-text-stroke:0.3px #50545c;">基桩数(根)</div>
<div class="a" style="left:340.50px;top:269.40px;width:20.60px;height:4.20px;filter:blur(1.0px);display:flex"><div style="width:4.28px;height:100%;background:rgb(177,177,177)"></div><div style="width:4.80px;height:100%;background:rgb(169,169,169)"></div><div style="width:5.10px;height:100%;background:rgb(178,178,178)"></div><div style="width:5.25px;height:100%;background:rgb(186,186,186)"></div><div style="width:1.17px;height:100%;background:rgb(165,165,165)"></div></div>
<div class="a" style="left:398.10px;top:269.40px;width:75.00px;height:4.20px;filter:blur(1.0px);display:flex"><div style="width:2.69px;height:100%;background:rgb(189,189,189)"></div><div style="width:3.78px;height:100%;background:rgb(162,162,162)"></div><div style="width:6.68px;height:100%;background:rgb(179,179,179)"></div><div style="width:5.82px;height:100%;background:rgb(187,187,187)"></div><div style="width:6.51px;height:100%;background:rgb(162,162,162)"></div><div style="width:5.75px;height:100%;background:rgb(158,158,158)"></div><div style="width:3.58px;height:100%;background:rgb(176,176,176)"></div><div style="width:3.68px;height:100%;background:rgb(186,186,186)"></div><div style="width:6.72px;height:100%;background:rgb(164,164,164)"></div><div style="width:5.87px;height:100%;background:rgb(179,179,179)"></div><div style="width:3.86px;height:100%;background:rgb(189,189,189)"></div><div style="width:5.23px;height:100%;background:rgb(178,178,178)"></div><div style="width:3.75px;height:100%;background:rgb(173,173,173)"></div><div style="width:4.23px;height:100%;background:rgb(163,163,163)"></div><div style="width:2.91px;height:100%;background:rgb(156,156,156)"></div><div style="width:3.93px;height:100%;background:rgb(191,191,191)"></div></div>
<div class="c" style="left:527.95px;top:272.50px;font-size:6.60px;color:#606266;-webkit-text-stroke:0.12px #606266;">280.32</div>
<div class="c" style="left:620.55px;top:272.50px;font-size:6.60px;color:#606266;-webkit-text-stroke:0.12px #606266;">0</div>
<div class="c" style="left:704.35px;top:272.50px;font-size:6.60px;color:#606266;-webkit-text-stroke:0.12px #606266;">24</div>
<div class="c" style="left:797.10px;top:272.50px;font-size:6.60px;color:#606266;-webkit-text-stroke:0.12px #606266;">24</div>
<div class="a" style="left:340.50px;top:289.70px;width:20.60px;height:4.20px;filter:blur(1.0px);display:flex"><div style="width:6.62px;height:100%;background:rgb(192,192,192)"></div><div style="width:5.64px;height:100%;background:rgb(171,171,171)"></div><div style="width:6.68px;height:100%;background:rgb(187,187,187)"></div><div style="width:1.67px;height:100%;background:rgb(163,163,163)"></div></div>
<div class="a" style="left:398.10px;top:289.70px;width:75.00px;height:4.20px;filter:blur(1.0px);display:flex"><div style="width:6.22px;height:100%;background:rgb(170,170,170)"></div><div style="width:6.65px;height:100%;background:rgb(159,159,159)"></div><div style="width:2.54px;height:100%;background:rgb(161,161,161)"></div><div style="width:5.38px;height:100%;background:rgb(166,166,166)"></div><div style="width:3.33px;height:100%;background:rgb(175,175,175)"></div><div style="width:6.77px;height:100%;background:rgb(181,181,181)"></div><div style="width:6.35px;height:100%;background:rgb(154,154,154)"></div><div style="width:3.35px;height:100%;background:rgb(189,189,189)"></div><div style="width:4.99px;height:100%;background:rgb(169,169,169)"></div><div style="width:5.91px;height:100%;background:rgb(183,183,183)"></div><div style="width:6.01px;height:100%;background:rgb(159,159,159)"></div><div style="width:4.53px;height:100%;background:rgb(160,160,160)"></div><div style="width:6.32px;height:100%;background:rgb(158,158,158)"></div><div style="width:3.47px;height:100%;background:rgb(192,192,192)"></div><div style="width:3.16px;height:100%;background:rgb(173,173,173)"></div></div>
<div class="c" style="left:527.95px;top:292.80px;font-size:6.60px;color:#606266;-webkit-text-stroke:0.12px #606266;">10026.19</div>
<div class="c" style="left:620.55px;top:292.80px;font-size:6.60px;color:#606266;-webkit-text-stroke:0.12px #606266;">0</div>
<div class="c" style="left:704.35px;top:292.80px;font-size:6.60px;color:#606266;-webkit-text-stroke:0.12px #606266;">537</div>
<div class="c" style="left:797.10px;top:292.80px;font-size:6.60px;color:#606266;-webkit-text-stroke:0.12px #606266;">537</div>
<div class="a" style="left:116.6px;top:385.6px;width:731.5px;height:41.2px;background:#f6f6f6"></div>
<svg class="a" style="left:0;top:0" width="860" height="490" viewBox="0 0 860 490"><path d="M116.6 469.2 H848.1" stroke="#ebebeb" stroke-width="0.8"/></svg>
<div class="a" style="left:126.3px;top:403.1px;width:6.2px;height:6.2px;border:0.6px solid #e0e0e0;border-radius:1px;background:#fff"></div>
<div class="a" style="left:126.3px;top:444.9px;width:6.2px;height:6.2px;border:0.6px solid #e0e0e0;border-radius:1px;background:#fff"></div>
<div class="a" style="left:126.3px;top:486.4px;width:6.2px;height:6.2px;border:0.6px solid #e0e0e0;border-radius:1px;background:#fff"></div>
<div class="m" style="left:160.7px;top:405.8px;font-size:6.2px;color:#50545c;-webkit-text-stroke:0.3px #50545c;line-height:10.5px">桩区名称</div>
<div class="m" style="left:198.1px;top:405.8px;font-size:6.2px;color:#50545c;-webkit-text-stroke:0.3px #50545c;line-height:10.5px">设备名称</div>
<div class="m" style="left:235.4px;top:405.8px;font-size:6.2px;color:#50545c;-webkit-text-stroke:0.3px #50545c;line-height:10.5px">桩点名称</div>
<div class="m" style="left:296.1px;top:405.8px;font-size:6.2px;color:#50545c;-webkit-text-stroke:0.3px #50545c;line-height:10.5px">下钻开始时间</div>
<div class="m" style="left:379.8px;top:405.8px;font-size:6.2px;color:#50545c;-webkit-text-stroke:0.3px #50545c;line-height:10.5px">下钻结束时间</div>
<div class="m" style="left:441px;top:405.8px;font-size:6.2px;color:#50545c;-webkit-text-stroke:0.3px #50545c;line-height:10.5px">下钻时长<br>(s)</div>
<div class="m" style="left:501.3px;top:405.8px;font-size:6.2px;color:#50545c;-webkit-text-stroke:0.3px #50545c;line-height:10.5px">提钻开始时间</div>
<div class="m" style="left:585.4px;top:405.8px;font-size:6.2px;color:#50545c;-webkit-text-stroke:0.3px #50545c;line-height:10.5px">提钻结束时间</div>
<div class="m" style="left:646px;top:405.8px;font-size:6.2px;color:#50545c;-webkit-text-stroke:0.3px #50545c;line-height:10.5px">提钻时长<br>(s)</div>
<div class="m" style="left:683.3px;top:405.8px;font-size:6.2px;color:#50545c;-webkit-text-stroke:0.3px #50545c;line-height:10.5px">成桩时长<br>(s)</div>
<div class="m" style="left:720.5px;top:405.8px;font-size:6.2px;color:#50545c;-webkit-text-stroke:0.3px #50545c;line-height:10.5px">提钻平均<br>速度(m/m<br>in)</div>
<div class="m" style="left:757.7px;top:405.8px;font-size:6.2px;color:#50545c;-webkit-text-stroke:0.3px #50545c;line-height:10.5px">设计桩长<br>(m)</div>
<div class="m" style="left:795.6px;top:405.8px;font-size:6.2px;color:#50545c;-webkit-text-stroke:0.3px #50545c;line-height:10.5px">成桩深度<br>(m)</div>
<div class="m" style="left:833.2px;top:405.8px;font-size:6.2px;color:#50545c;-webkit-text-stroke:0.3px #50545c;line-height:10.5px">北方向偏<br>移值(mm)</div>
<div class="c" style="left:235.40px;top:448.70px;font-size:6.60px;color:#606266;-webkit-text-stroke:0.12px #606266;">5-92-37</div>
<div class="c" style="left:296.10px;top:448.70px;font-size:6.60px;color:#606266;-webkit-text-stroke:0.12px #606266;">2023-07-22 09:58:29</div>
<div class="c" style="left:379.80px;top:448.70px;font-size:6.60px;color:#606266;-webkit-text-stroke:0.12px #606266;">2023-07-22 10:05:41</div>
<div class="c" style="left:441.00px;top:448.70px;font-size:6.60px;color:#606266;-webkit-text-stroke:0.12px #606266;">432</div>
<div class="c" style="left:501.30px;top:448.70px;font-size:6.60px;color:#606266;-webkit-text-stroke:0.12px #606266;">2023-07-22 10:05:51</div>
<div class="c" style="left:585.40px;top:448.70px;font-size:6.60px;color:#606266;-webkit-text-stroke:0.12px #606266;">2023-07-22 10:10:08</div>
<div class="c" style="left:646.00px;top:448.70px;font-size:6.60px;color:#606266;-webkit-text-stroke:0.12px #606266;">257</div>
<div class="c" style="left:683.30px;top:448.70px;font-size:6.60px;color:#606266;-webkit-text-stroke:0.12px #606266;">689</div>
<div class="c" style="left:720.50px;top:448.70px;font-size:6.60px;color:#606266;-webkit-text-stroke:0.12px #606266;">2.73</div>
<div class="c" style="left:757.70px;top:448.70px;font-size:6.60px;color:#606266;-webkit-text-stroke:0.12px #606266;">11.00</div>
<div class="c" style="left:795.60px;top:448.70px;font-size:6.60px;color:#606266;-webkit-text-stroke:0.12px #606266;">11.70</div>
<div class="c" style="left:833.20px;top:448.70px;font-size:6.60px;color:#606266;-webkit-text-stroke:0.12px #606266;">39</div>
<div class="c" style="left:235.40px;top:489.90px;font-size:6.60px;color:#606266;-webkit-text-stroke:0.12px #606266;">5-92-34</div>
<div class="c" style="left:296.10px;top:489.90px;font-size:6.60px;color:#606266;-webkit-text-stroke:0.12px #606266;">2023-07-22 08:12:42</div>
<div class="c" style="left:379.80px;top:489.90px;font-size:6.60px;color:#606266;-webkit-text-stroke:0.12px #606266;">2023-07-22 08:55:04</div>
<div class="c" style="left:441.00px;top:489.90px;font-size:6.60px;color:#606266;-webkit-text-stroke:0.12px #606266;">2542</div>
<div class="c" style="left:501.30px;top:489.90px;font-size:6.60px;color:#606266;-webkit-text-stroke:0.12px #606266;">2023-07-22 08:55:24</div>
<div class="c" style="left:585.40px;top:489.90px;font-size:6.60px;color:#606266;-webkit-text-stroke:0.12px #606266;">2023-07-22 09:34:33</div>
<div class="c" style="left:646.00px;top:489.90px;font-size:6.60px;color:#606266;-webkit-text-stroke:0.12px #606266;">2349</div>
<div class="c" style="left:683.30px;top:489.90px;font-size:6.60px;color:#606266;-webkit-text-stroke:0.12px #606266;">4801</div>
<div class="c" style="left:720.50px;top:489.90px;font-size:6.60px;color:#606266;-webkit-text-stroke:0.12px #606266;">0.31</div>
<div class="c" style="left:757.70px;top:489.90px;font-size:6.60px;color:#606266;-webkit-text-stroke:0.12px #606266;">11.00</div>
<div class="c" style="left:795.60px;top:489.90px;font-size:6.60px;color:#606266;-webkit-text-stroke:0.12px #606266;">12.30</div>
<div class="c" style="left:833.20px;top:489.90px;font-size:6.60px;color:#606266;-webkit-text-stroke:0.12px #606266;">138</div>
<div class="a" style="left:149.20px;top:435.60px;width:25.20px;height:3.60px;filter:blur(1.0px);display:flex"><div style="width:5.78px;height:100%;background:rgb(191,191,191)"></div><div style="width:4.15px;height:100%;background:rgb(188,188,188)"></div><div style="width:3.30px;height:100%;background:rgb(206,206,206)"></div><div style="width:2.93px;height:100%;background:rgb(173,173,173)"></div><div style="width:2.67px;height:100%;background:rgb(185,185,185)"></div><div style="width:5.47px;height:100%;background:rgb(179,179,179)"></div><div style="width:0.91px;height:100%;background:rgb(202,202,202)"></div></div>
<div class="a" style="left:145.10px;top:444.70px;width:29.30px;height:7.00px;filter:blur(1.0px);display:flex"><div style="width:2.82px;height:100%;background:rgb(224,224,224)"></div><div style="width:6.91px;height:100%;background:rgb(200,200,200)"></div><div style="width:4.03px;height:100%;background:rgb(201,201,201)"></div><div style="width:5.97px;height:100%;background:rgb(196,196,196)"></div><div style="width:4.28px;height:100%;background:rgb(203,203,203)"></div><div style="width:5.29px;height:100%;background:rgb(215,215,215)"></div></div>
<div class="a" style="left:149.20px;top:456.80px;width:25.20px;height:3.60px;filter:blur(1.0px);display:flex"><div style="width:4.11px;height:100%;background:rgb(167,167,167)"></div><div style="width:4.26px;height:100%;background:rgb(174,174,174)"></div><div style="width:4.77px;height:100%;background:rgb(193,193,193)"></div><div style="width:3.55px;height:100%;background:rgb(180,180,180)"></div><div style="width:3.84px;height:100%;background:rgb(198,198,198)"></div><div style="width:4.67px;height:100%;background:rgb(186,186,186)"></div></div>
<div class="a" style="left:186.70px;top:445.90px;width:20.30px;height:5.00px;filter:blur(1.0px);display:flex"><div style="width:2.99px;height:100%;background:rgb(208,208,208)"></div><div style="width:4.31px;height:100%;background:rgb(209,209,209)"></div><div style="width:3.22px;height:100%;background:rgb(186,186,186)"></div><div style="width:5.57px;height:100%;background:rgb(199,199,199)"></div><div style="width:4.20px;height:100%;background:rgb(188,188,188)"></div></div>
<div class="a" style="left:149.20px;top:477.40px;width:25.20px;height:3.60px;filter:blur(1.0px);display:flex"><div style="width:4.56px;height:100%;background:rgb(193,193,193)"></div><div style="width:5.13px;height:100%;background:rgb(191,191,191)"></div><div style="width:6.21px;height:100%;background:rgb(174,174,174)"></div><div style="width:5.05px;height:100%;background:rgb(196,196,196)"></div><div style="width:4.26px;height:100%;background:rgb(168,168,168)"></div></div>
<div class="a" style="left:145.10px;top:486.90px;width:29.30px;height:5.00px;filter:blur(1.0px);display:flex"><div style="width:5.00px;height:100%;background:rgb(190,190,190)"></div><div style="width:4.45px;height:100%;background:rgb(194,194,194)"></div><div style="width:2.76px;height:100%;background:rgb(189,189,189)"></div><div style="width:4.50px;height:100%;background:rgb(209,209,209)"></div><div style="width:6.34px;height:100%;background:rgb(192,192,192)"></div><div style="width:6.26px;height:100%;background:rgb(195,195,195)"></div></div>
<div class="a" style="left:186.70px;top:487.40px;width:20.30px;height:4.00px;filter:blur(1.0px);display:flex"><div style="width:6.70px;height:100%;background:rgb(216,216,216)"></div><div style="width:5.52px;height:100%;background:rgb(217,217,217)"></div><div style="width:4.27px;height:100%;background:rgb(204,204,204)"></div><div style="width:3.81px;height:100%;background:rgb(183,183,183)"></div></div>
<div class="a" style="left:857px;top:0;width:3px;height:490px;background:#f1f1f1"></div>
<div class="a" style="left:857.6px;top:0.5px;width:2.4px;height:271.7px;background:#bdbdbd;border-radius:1px"></div>
</div></body></html>
